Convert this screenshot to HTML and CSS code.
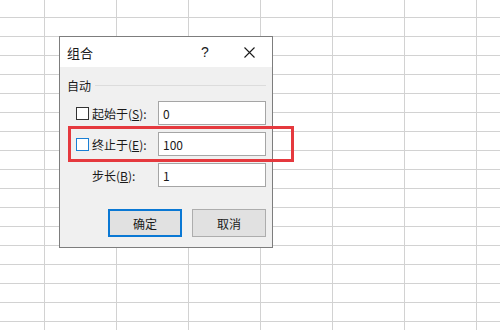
FILE: index.html
```html
<!DOCTYPE html>
<html lang="zh-CN">

<head>
    <meta charset="UTF-8">
    <title>组合</title>
    <link rel="stylesheet" href="styles.css">
</head>

<body>
    <div class="sheet"></div>

    <div class="dialog">
        <div class="titlebar">
            <span class="title">组合</span>
            <span class="help">?</span>
            <span class="close">
                <svg width="11" height="11" viewBox="0 0 11 11">
                    <path d="M0.5 0.5 L10.5 10.5 M10.5 0.5 L0.5 10.5" stroke="#1a1a1a" stroke-width="1.1" fill="none"/>
                </svg>
            </span>
        </div>

        <div class="content">
            <div class="group-head">
                <span>自动</span>
                <span class="rule"></span>
            </div>

            <div class="rows">
                <label class="field">
                    <span class="check"></span>
                    <span>起始于(<u>S</u>):</span>
                </label>
                <div class="input">0</div>

                <label class="field">
                    <span class="check hover"></span>
                    <span>终止于(<u>E</u>):</span>
                </label>
                <div class="input">100</div>

                <label class="field step">
                    <span>步长(<u>B</u>):</span>
                </label>
                <div class="input">1</div>
            </div>

            <div class="buttons">
                <button class="btn primary">确定</button>
                <button class="btn">取消</button>
            </div>
        </div>
    </div>

    <!-- highlight annotation -->
    <div class="mark"></div>
</body>

</html>
```

FILE: styles.css
```css
body {
    margin: 0;
    width: 500px;
    height: 330px;
    overflow: hidden;
    background: #fff;
    font-family: "Noto Sans CJK SC", "Noto Sans", sans-serif;
    color: #1a1a1a;
}

.sheet {
    width: 100%;
    height: 100%;
    background-image:
        linear-gradient(to right, #d2d2d2 1px, transparent 1px),
        linear-gradient(to bottom, #d2d2d2 1px, transparent 1px);
    background-size: 72px 19px;
    background-position: 44px 17px;
}

.dialog {
    position: absolute;
    left: 59px;
    top: 36px;
    width: 212px;
    border: 1px solid #7d7d7d;
    background: #f0f0f0;
}

.titlebar {
    height: 30px;
    background: #fff;
    display: flex;
    align-items: center;
    padding-left: 7px;
    font-size: 13px;
}

.title {
    flex: 1;
}

.help {
    width: 10px;
    margin-right: 33px;
    font-family: "Liberation Sans", sans-serif;
    font-size: 14px;
}

.close {
    display: flex;
    margin-right: 17px;
}

.content {
    padding: 8px 6px 10px 7px;
    font-size: 12px;
}

.group-head {
    display: flex;
    align-items: center;
    height: 18px;
    gap: 4px;
    padding-top: 1px;
}

.rule {
    flex: 1;
    height: 1px;
    background: #dcdcdc;
}

.rows {
    margin-top: 7px;
    padding-left: 9px;
    display: grid;
    grid-template-columns: 82px 108px;
    grid-auto-rows: 24px;
    row-gap: 7px;
}

.field {
    display: flex;
    align-items: center;
    gap: 3px;
}

.field.step {
    padding-left: 16px;
}

.check {
    width: 11px;
    height: 11px;
    border: 1px solid #333;
    background: #fff;
}

.check.hover {
    border-color: #1a7fd4;
}

.input {
    box-sizing: border-box;
    height: 24px;
    border: 1px solid #a5a5a5;
    background: #fff;
    padding-left: 4px;
    display: flex;
    align-items: center;
    font-size: 12px;
}

.buttons {
    margin-top: 22px;
    display: flex;
    justify-content: flex-end;
    gap: 10px;
}

.btn {
    box-sizing: border-box;
    width: 74px;
    height: 28px;
    background: #e1e1e1;
    border: 1px solid #adadad;
    font-family: "Noto Sans CJK SC", sans-serif;
    font-size: 12px;
    color: #1a1a1a;
    padding: 0;
}

.btn.primary {
    border: 2px solid #0a78d4;
}

.mark {
    position: absolute;
    left: 68px;
    top: 126px;
    width: 226px;
    height: 36px;
    box-sizing: border-box;
    border: 3px solid #e5393e;
}
```
